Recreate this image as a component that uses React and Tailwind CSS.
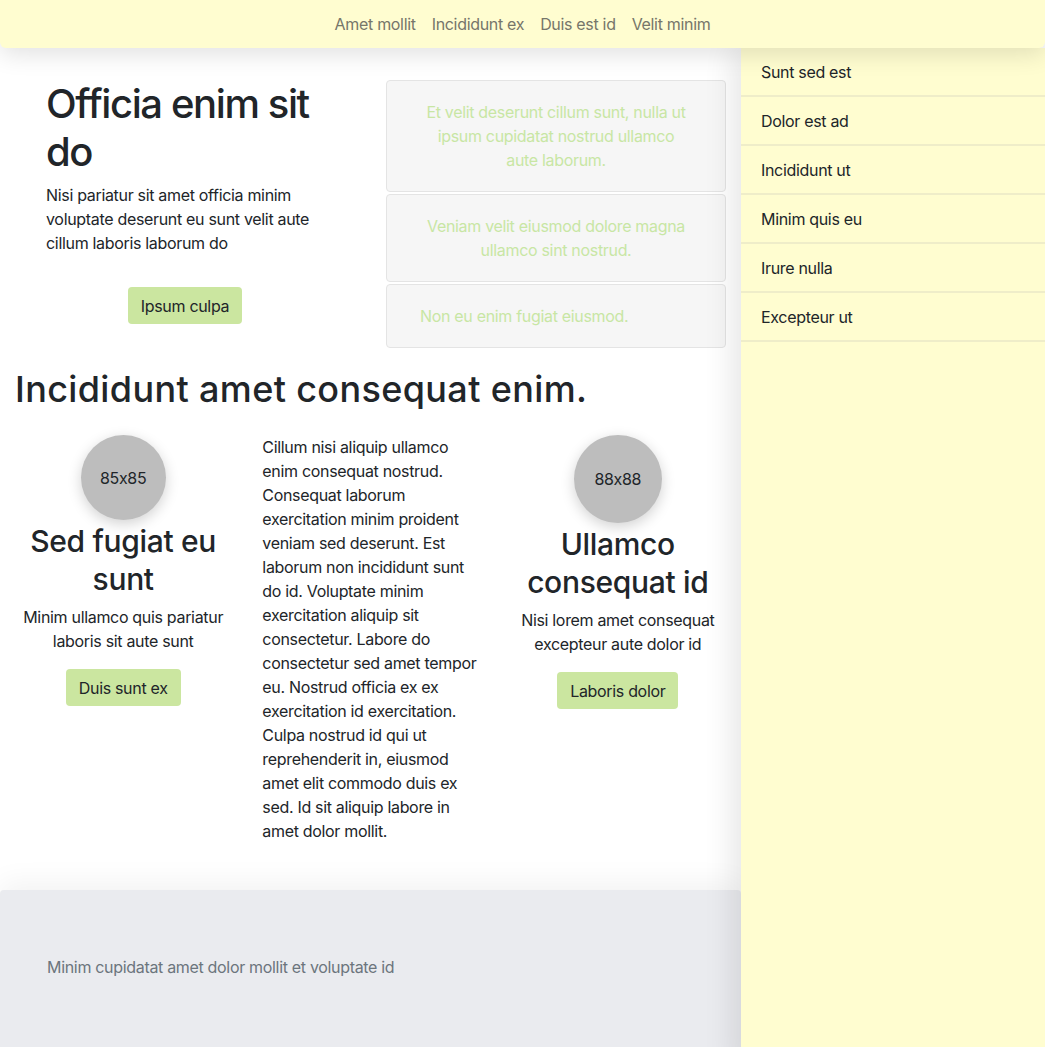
import React from 'react';

const navLinks = ['Amet mollit', 'Incididunt ex', 'Duis est id', 'Velit minim'];
const sideLinks = ['Sunt sed est', 'Dolor est ad', 'Incididunt ut', 'Minim quis eu', 'Irure nulla', 'Excepteur ut'];

const Feature = ({ size, sizeClass, title, text, action }) => (
    <div className="flex flex-col items-center text-center">
        <div className={`${sizeClass} rounded-full bg-[#bdbdbd] shadow-[0_4px_14px_rgba(0,0,0,0.18)] flex items-center justify-center text-[16px] text-[#212529]`}>
            {size}
        </div>
        <h3 className="mt-[2px] text-[30px] leading-[38px] font-medium text-[#212529]">{title}</h3>
        <p className="mt-[7px] text-[16px] leading-6 text-[#212529]">{text}</p>
        <button className="mt-4 h-[37px] px-[13px] rounded-[4px] bg-[#cbe6a0] text-[16px] text-[#212529]">{action}</button>
    </div>
);

const App = () => {
    return (
        <div className="min-h-screen bg-white font-['Inter','Liberation_Sans',sans-serif] tracking-[-0.02em] [font-feature-settings:'calt'_0] text-[#212529]">
            <nav className="relative z-20 h-[48px] bg-[#fffdd0] rounded-b-[6px] shadow-[0_6px_24px_rgba(0,0,0,0.12)] flex items-center justify-center gap-4">
                {navLinks.map((link) => (
                    <a key={link} className="text-[16px] text-[#76766a]">{link}</a>
                ))}
            </nav>

            <div className="flex">
                <main className="w-[741px] shrink-0">
                    <section className="flex pt-[32px]">
                        <div className="ml-[46px] w-[278px]">
                            <h1 className="text-[40px] leading-[48px] font-medium tracking-[-0.035em]">Officia enim sit do</h1>
                            <p className="mt-[7px] text-[16px] leading-6">
                                Nisi pariatur sit amet officia minim voluptate deserunt eu sunt velit aute cillum laboris laborum do
                            </p>
                            <div className="mt-8 flex justify-center">
                                <button className="h-[37px] px-[13px] rounded-[4px] bg-[#cbe6a0] text-[16px] text-[#212529]">Ipsum culpa</button>
                            </div>
                        </div>
                        <div className="ml-[62px] w-[340px] flex flex-col gap-[2px]">
                            <div className="bg-[#f6f6f6] border border-[#e4e4e4] rounded-[4px] px-[33px] py-[19px] text-center text-[16px] leading-6 text-[#c8e6a4]">
                                Et velit deserunt cillum sunt, nulla ut ipsum cupidatat nostrud ullamco aute laborum.
                            </div>
                            <div className="bg-[#f6f6f6] border border-[#e4e4e4] rounded-[4px] px-[33px] py-[19px] text-center text-[16px] leading-6 text-[#c8e6a4]">
                                Veniam velit eiusmod dolore magna ullamco sint nostrud.
                            </div>
                            <div className="bg-[#f6f6f6] border border-[#e4e4e4] rounded-[4px] px-[33px] py-[19px] text-[16px] leading-6 text-[#c8e6a4]">
                                Non eu enim fugiat eiusmod.
                            </div>
                        </div>
                    </section>

                    <section className="px-[15px] mt-5">
                        <h2 className="text-[36px] leading-[43px] font-medium tracking-[0.01em]">Incididunt amet consequat enim.</h2>
                        <div className="mt-[24px] grid grid-cols-3 gap-[31px]">
                            <Feature
                                size="85x85"
                                sizeClass="w-[85px] h-[85px]"
                                title="Sed fugiat eu sunt"
                                text="Minim ullamco quis pariatur laboris sit aute sunt"
                                action="Duis sunt ex"
                            />
                            <p className="text-[16px] leading-6">
                                Cillum nisi aliquip ullamco enim consequat nostrud. Consequat laborum exercitation minim proident veniam sed deserunt. Est laborum non incididunt sunt do id. Voluptate minim exercitation aliquip sit consectetur. Labore do consectetur sed amet tempor eu. Nostrud officia ex ex exercitation id exercitation. Culpa nostrud id qui ut reprehenderit in, eiusmod amet elit commodo duis ex sed. Id sit aliquip labore in amet dolor mollit.
                            </p>
                            <Feature
                                size="88x88"
                                sizeClass="w-[88px] h-[88px]"
                                title="Ullamco consequat id"
                                text="Nisi lorem amet consequat excepteur aute dolor id"
                                action="Laboris dolor"
                            />
                        </div>
                    </section>

                    <footer className="mt-[47px] bg-[#eaebef] rounded-t-[4px] shadow-[0_-8px_28px_rgba(0,0,0,0.05)] px-[47px] pt-[65px] pb-[90px]">
                        <p className="text-[16px] leading-6 text-[#6c757d]">Minim cupidatat amet dolor mollit et voluptate id</p>
                    </footer>
                </main>

                <aside className="relative z-10 flex-1 bg-[#fffdd0] shadow-[-8px_0_28px_rgba(0,0,0,0.1)]">
                    {sideLinks.map((link) => (
                        <div key={link} className="h-[49px] border-b-2 border-[#efedc9] px-5 flex items-center text-[16px] text-[#212529]">
                            {link}
                        </div>
                    ))}
                </aside>
            </div>
        </div>
    );
};

export default App;
